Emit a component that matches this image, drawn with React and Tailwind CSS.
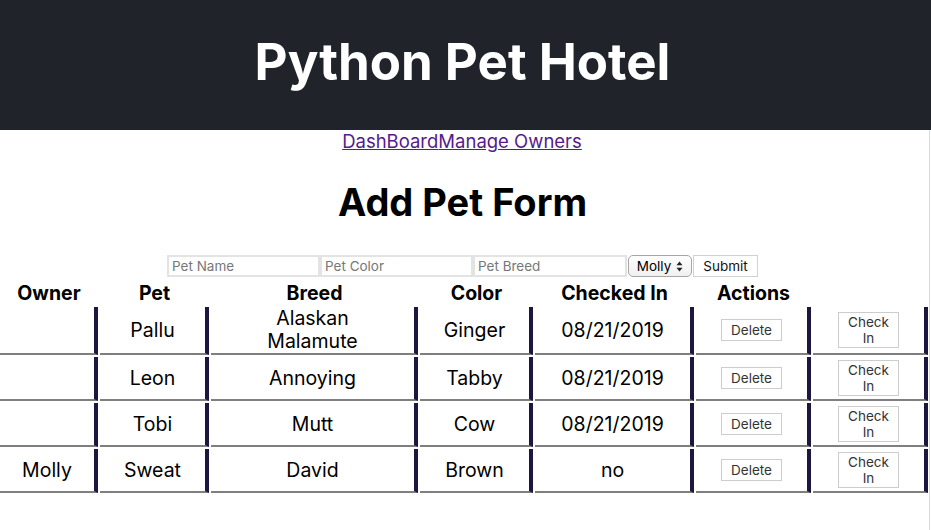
const pets = [
  { owner: '', pet: 'Pallu', breed: 'Alaskan Malamute', color: 'Ginger', checkedIn: '08/21/2019' },
  { owner: '', pet: 'Leon', breed: 'Annoying', color: 'Tabby', checkedIn: '08/21/2019' },
  { owner: '', pet: 'Tobi', breed: 'Mutt', color: 'Cow', checkedIn: '08/21/2019' },
  { owner: 'Molly', pet: 'Sweat', breed: 'David', color: 'Brown', checkedIn: 'no' },
];

const headers = ['Owner', 'Pet', 'Breed', 'Color', 'Checked In', 'Actions', ''];

const cell =
  'flex items-center justify-center text-center border-r-4 border-b-2 border-r-[#1d1640] border-b-[#7f7f7f]';

function SelectArrows() {
  return (
    <svg width="7" height="11" viewBox="0 0 7 11" className="ml-[5px]">
      <path d="M3.5 0.5 L6.5 4.2 L0.5 4.2 Z" fill="#222" />
      <path d="M3.5 10.5 L6.5 6.8 L0.5 6.8 Z" fill="#222" />
    </svg>
  );
}

export default function App() {
  return (
    <div className="min-h-[530px] bg-white font-['Inter','Liberation_Sans',sans-serif] text-black">
      <header className="h-[130px] bg-[#202329] pr-[6px] pt-[36px] text-center">
        <h1 className="text-[51px] font-bold leading-[51px] text-white">Python Pet Hotel</h1>
      </header>

      <main className="min-h-[400px] w-[930px] border-r border-[#dcdcdc]">
        <nav className="flex h-[22px] justify-center pr-[5px] text-[18.5px] leading-[22px] text-[#551a8b]">
          <a href="#" className="underline">DashBoard</a>
          <a href="#" className="underline">Manage Owners</a>
        </nav>

        <h2 className="mt-[31px] h-[38px] pr-[4px] text-center text-[38px] font-bold leading-[38px]">Add Pet Form</h2>

        <form className="mt-[34px] flex h-[22px] justify-center pr-[4px] text-[13.5px]">
          <input
            placeholder="Pet Name"
            className="h-[22px] w-[153px] border-2 border-[#e3e3e3] px-[3px] placeholder:text-[#777]"
          />
          <input
            placeholder="Pet Color"
            className="h-[22px] w-[153px] border-2 border-[#e3e3e3] px-[3px] placeholder:text-[#777]"
          />
          <input
            placeholder="Pet Breed"
            className="h-[22px] w-[154px] border-2 border-[#e3e3e3] px-[3px] placeholder:text-[#777]"
          />
          <div className="ml-[1px] flex h-[22px] w-[64px] items-center justify-center rounded-[5px] border border-[#a6a6a6] bg-gradient-to-b from-white to-[#f0f0f0]">
            <span>Molly</span>
            <SelectArrows />
          </div>
          <button type="button" className="ml-[1px] h-[22px] w-[65px] border border-[#d2d2d2] bg-white text-[#111]">
            Submit
          </button>
        </form>

        <div className="mt-[4px] grid w-[928px] grid-cols-[98px_109px_207px_113px_159px_115px_115px] grid-rows-[24px_48px_44px_44px_44px] gap-[2px] text-[19.5px]">
          {headers.map((h, i) => (
            <div key={i} className="text-center font-bold leading-[24px]">
              {h}
            </div>
          ))}

          {pets.map((p) => (
            <div key={p.pet} className="contents leading-[23px]">
              <div className={cell}>{p.owner}</div>
              <div className={cell}>{p.pet}</div>
              <div className={cell}>
                <span className="max-w-[100px]">{p.breed}</span>
              </div>
              <div className={cell}>{p.color}</div>
              <div className={cell}>{p.checkedIn}</div>
              <div className={cell}>
                <button
                  type="button"
                  className="h-[22px] w-[61px] border border-[#cdcdcd] bg-white text-[13.5px] leading-[16px] text-[#333]"
                >
                  Delete
                </button>
              </div>
              <div className={cell}>
                <button
                  type="button"
                  className="h-[36px] w-[61px] border border-[#cdcdcd] bg-white px-[8px] text-[13.5px] leading-[16px] text-[#333]"
                >
                  Check In
                </button>
              </div>
            </div>
          ))}
        </div>
      </main>
    </div>
  );
}
